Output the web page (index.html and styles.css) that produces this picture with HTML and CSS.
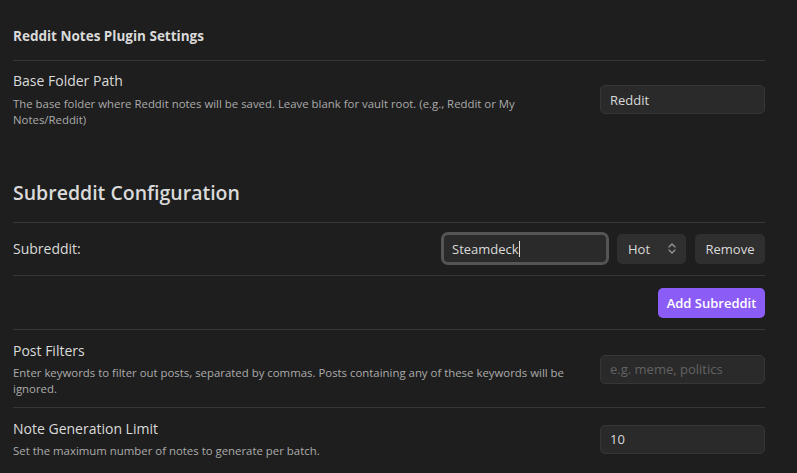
FILE: index.html
```html
<!DOCTYPE html>
<html>
<head>
<meta charset="utf-8">
<link rel="stylesheet" href="styles.css">
</head>
<body>
<div class="settings">
  <div class="plugin-title">Reddit Notes Plugin Settings</div>

  <div class="setting-item first">
    <div class="info">
      <div class="name">Base Folder Path</div>
      <div class="desc">The base folder where Reddit notes will be saved. Leave blank for vault root. (e.g., Reddit or My Notes/Reddit)</div>
    </div>
    <div class="control">
      <input class="text-input" type="text" value="Reddit">
    </div>
  </div>

  <div class="section-heading">Subreddit Configuration</div>

  <div class="setting-item row-sub">
    <div class="info">
      <div class="name">Subreddit:</div>
    </div>
    <div class="control group">
      <div class="text-input focused">Steamdeck<span class="caret"></span></div>
      <div class="dropdown">Hot
        <svg class="chev" width="8" height="11" viewBox="0 0 8 11"><path d="M1 4 L4 1 L7 4 M1 7 L4 10 L7 7" fill="none" stroke="#9a9a9a" stroke-width="1.2" stroke-linecap="round" stroke-linejoin="round"/></svg>
      </div>
      <button class="btn">Remove</button>
    </div>
  </div>

  <div class="setting-item row-add">
    <div class="info"></div>
    <div class="control">
      <button class="btn cta">Add Subreddit</button>
    </div>
  </div>

  <div class="setting-item">
    <div class="info">
      <div class="name">Post Filters</div>
      <div class="desc">Enter keywords to filter out posts, separated by commas. Posts containing any of these keywords will be ignored.</div>
    </div>
    <div class="control">
      <input class="text-input" type="text" placeholder="e.g. meme, politics">
    </div>
  </div>

  <div class="setting-item">
    <div class="info">
      <div class="name">Note Generation Limit</div>
      <div class="desc">Set the maximum number of notes to generate per batch.</div>
    </div>
    <div class="control">
      <input class="text-input" type="text" value="10">
    </div>
  </div>
</div>
</body>
</html>
```

FILE: styles.css
```css
* { box-sizing: border-box; }
html, body {
  margin: 0;
  background: #1e1e1e;
  height: 100%;
  overflow: hidden;
}
body {
  font-family: "Open Sans", "Noto Sans", sans-serif;
  color: #dadada;
}
.settings {
  padding: 0 32px 0 13px;
}
.plugin-title {
  font-size: 13.5px;
  font-weight: 700;
  line-height: 18px;
  padding: 27px 0 15px;
  border-bottom: 1px solid #363636;
}
.setting-item {
  display: flex;
  align-items: center;
  border-top: 1px solid #363636;
  padding: 11px 0 10px;
}
.setting-item.first {
  border-top: none;
  padding: 10px 0 10px;
}
.info {
  flex: 1 1 auto;
  margin-right: 24px;
}
.name {
  font-size: 14px;
  line-height: 20px;
  color: #dadada;
}
.desc {
  font-size: 11.4px;
  line-height: 16px;
  color: #ababab;
  margin-top: 4px;
}
.setting-item.first .desc { margin-top: 5px; }
.control {
  flex: 0 0 auto;
  display: flex;
  align-items: center;
}
.text-input {
  width: 165px;
  height: 29px;
  background: #2a2a2a;
  border: 1px solid #363636;
  border-radius: 5px;
  color: #dadada;
  font-family: inherit;
  font-size: 13px;
  padding: 0 9px;
  outline: none;
}
.text-input::placeholder { color: #626262; }
.section-heading {
  font-size: 19.5px;
  font-weight: 600;
  line-height: 28px;
  margin-top: 41px;
  padding-bottom: 15px;
}
.setting-item.row-sub { padding: 9px 0 10px; }
.group { gap: 0; }
.text-input.focused {
  width: 168px;
  height: 33px;
  border: 3px solid #555555;
  border-radius: 7px;
  display: flex;
  align-items: center;
  padding: 0 8px;
  font-size: 13px;
}
.caret {
  display: inline-block;
  width: 1px;
  height: 16px;
  background: #e0e0e0;
}
.dropdown {
  width: 69px;
  height: 30px;
  margin-left: 8px;
  background: #2f2f2f;
  border-radius: 5px;
  display: flex;
  align-items: center;
  justify-content: space-between;
  padding: 0 10px 0 11px;
  font-size: 13px;
  color: #dadada;
}
.btn {
  height: 30px;
  background: #2f2f2f;
  border: none;
  border-radius: 5px;
  color: #dadada;
  font-family: inherit;
  font-size: 13px;
  width: 70px;
  padding: 0;
  margin-left: 9px;
}
.setting-item.row-add { padding: 12px 0 11px; }
.btn.cta {
  background: #8b5cf6;
  color: #ffffff;
  font-weight: 600;
  width: 107px;
  margin-left: 0;
}
```
